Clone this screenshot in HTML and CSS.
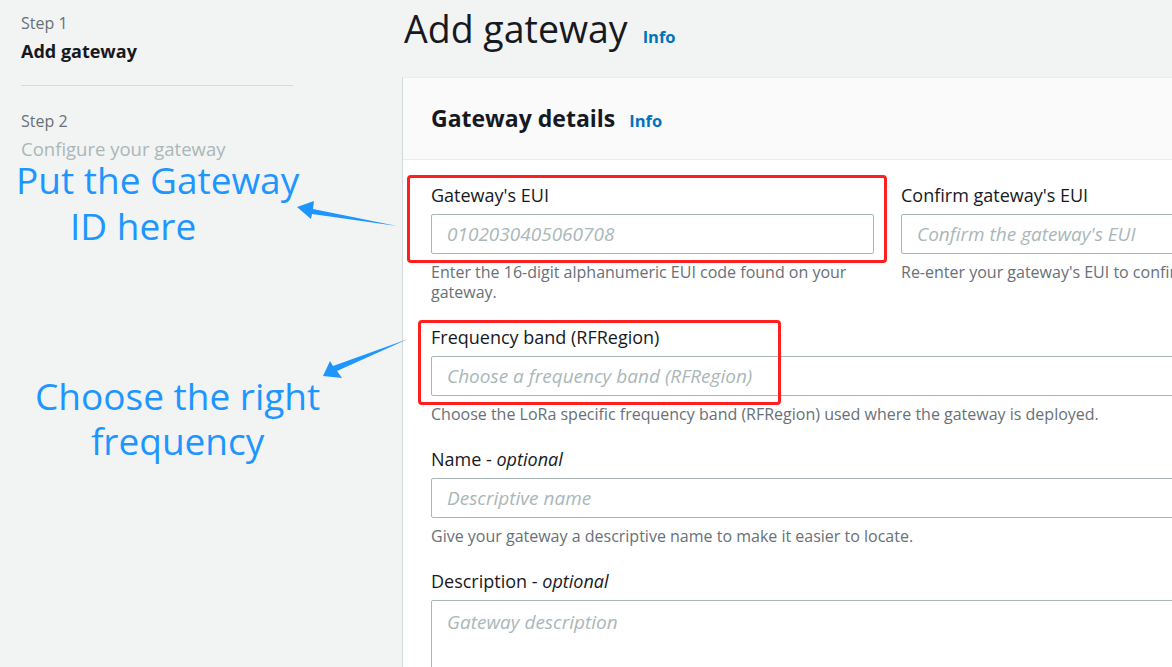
FILE: index.html
```html
<!DOCTYPE html>
<html lang="en">
<head>
    <meta charset="UTF-8">
    <meta name="viewport" content="width=device-width, initial-scale=1.0">
    <title>Add gateway</title>
    <link rel="stylesheet" href="styles.css">
</head>
<body>
    <div class="page">
        <!-- Wizard steps -->
        <nav class="steps">
            <div class="step">
                <div class="step-num">Step 1</div>
                <div class="step-title active">Add gateway</div>
            </div>
            <div class="step-divider"></div>
            <div class="step">
                <div class="step-num">Step 2</div>
                <div class="step-title">Configure your gateway</div>
            </div>
        </nav>

        <!-- Main form -->
        <main class="main">
            <div class="page-head">
                <h1>Add gateway</h1>
                <a class="info" href="#">Info</a>
            </div>

            <section class="panel">
                <div class="panel-head">
                    <h2>Gateway details</h2>
                    <a class="info" href="#">Info</a>
                </div>
                <div class="panel-body">
                    <div class="row">
                        <div class="field">
                            <label>Gateway's EUI</label>
                            <input type="text" placeholder="0102030405060708">
                            <p class="hint">Enter the 16-digit alphanumeric EUI code found on your gateway.</p>
                        </div>
                        <div class="field">
                            <label>Confirm gateway's EUI</label>
                            <input type="text" placeholder="Confirm the gateway's EUI">
                            <p class="hint">Re-enter your gateway's EUI to confirm it.</p>
                        </div>
                    </div>
                    <div class="field">
                        <label>Frequency band (RFRegion)</label>
                        <div class="select">Choose a frequency band (RFRegion)</div>
                        <p class="hint">Choose the LoRa specific frequency band (RFRegion) used where the gateway is deployed.</p>
                    </div>
                    <div class="field">
                        <label>Name - <i>optional</i></label>
                        <input type="text" placeholder="Descriptive name">
                        <p class="hint">Give your gateway a descriptive name to make it easier to locate.</p>
                    </div>
                    <div class="field">
                        <label>Description - <i>optional</i></label>
                        <textarea placeholder="Gateway description"></textarea>
                    </div>
                </div>
            </section>
        </main>
    </div>

    <!-- Annotations drawn over the screenshot -->
    <div class="note note-id">
        <span>Put the Gateway</span>
        <span class="indent">ID here</span>
    </div>
    <div class="note note-freq">
        <span>Choose the right</span>
        <span>frequency</span>
    </div>
    <div class="mark mark-eui"></div>
    <div class="mark mark-freq"></div>
    <svg class="arrows" width="1172" height="667" viewBox="0 0 1172 667">
        <polygon points="297,207 314,201 313,209 397,226 312,214 311,219" fill="#1e96ff"/>
        <polygon points="323,376 330,361 333,366 408,339 337,371 342,378" fill="#1e96ff"/>
    </svg>
</body>
</html>
```

FILE: styles.css
```css
body {
    margin: 0;
    background-color: #f2f3f3;
    font-family: "Open Sans", "Noto Sans", Arial, sans-serif;
    color: #16191f;
    overflow: hidden;
    width: 1172px;
    height: 667px;
    position: relative;
}
.page {
    display: flex;
}
.steps {
    width: 272px;
    flex-shrink: 0;
    padding: 13px 109px 0 21px;
}
.step-num {
    font-size: 16px;
    line-height: 20px;
    color: #687078;
}
.step-title {
    margin-top: 8px;
    font-size: 18.5px;
    line-height: 20px;
    color: #aab7b8;
}
.step-title.active {
    font-size: 18px;
    font-weight: 700;
    color: #16191f;
}
.step-divider {
    border-top: 1px solid #d5dbdb;
    margin: 24px 0 25px;
}
.main {
    flex-shrink: 0;
    width: 1000px;
}
.page-head {
    display: flex;
    align-items: baseline;
    gap: 15px;
    padding: 7px 0 0 2px;
    height: 77px;
    box-sizing: border-box;
}
h1 {
    margin: 0;
    font-size: 37.5px;
    line-height: 44px;
    font-weight: 400;
}
.info {
    font-size: 16.5px;
    font-weight: 700;
    color: #0073bb;
    text-decoration: none;
}
.panel {
    background: #fff;
    border-left: 1px solid #d5dbdb;
    border-top: 1px solid #eaeded;
}
.panel-head {
    display: flex;
    align-items: baseline;
    gap: 14px;
    background: #fafafa;
    border-bottom: 1px solid #eaeded;
    padding: 25px 28px 0;
    height: 82px;
    box-sizing: border-box;
}
h2 {
    margin: 0;
    font-size: 23px;
    line-height: 30px;
    font-weight: 700;
}
.panel-body {
    padding: 24px 28px;
    display: flex;
    flex-direction: column;
    gap: 24px;
}
.row {
    display: grid;
    grid-template-columns: 443px 443px;
    gap: 27px;
}
.field {
    display: flex;
    flex-direction: column;
}
label {
    font-size: 18px;
    line-height: 22px;
    margin-bottom: 8px;
}
input, .select, textarea {
    box-sizing: border-box;
    height: 40px;
    border: 1px solid #aab7b8;
    border-radius: 2px;
    padding: 0 15px;
    font-family: inherit;
    font-size: 19px;
    background: #fff;
}
input::placeholder, textarea::placeholder {
    color: #aab7b8;
    font-style: italic;
}
.select {
    display: flex;
    align-items: center;
    color: #aab7b8;
    font-style: italic;
}
textarea {
    height: 90px;
    padding-top: 8px;
    resize: none;
}
.hint {
    margin: 8px 0 0;
    font-size: 16px;
    line-height: 20px;
    color: #687078;
}
.note {
    position: absolute;
    display: flex;
    flex-direction: column;
    gap: 6px;
    font-size: 37px;
    line-height: 40px;
    color: #1e96ff;
}
.note-id {
    left: 16px;
    top: 160px;
}
.note-id .indent {
    padding-left: 54px;
}
.note-freq {
    left: 35px;
    top: 376px;
    gap: 5px;
    align-items: center;
}
.mark {
    position: absolute;
    border: 3px solid #fe1f1f;
    border-radius: 4px;
}
.mark-eui {
    left: 407px;
    top: 175px;
    width: 474px;
    height: 82px;
}
.mark-freq {
    left: 418px;
    top: 320px;
    width: 357px;
    height: 79px;
}
.arrows {
    position: absolute;
    left: 0;
    top: 0;
    pointer-events: none;
}
```
